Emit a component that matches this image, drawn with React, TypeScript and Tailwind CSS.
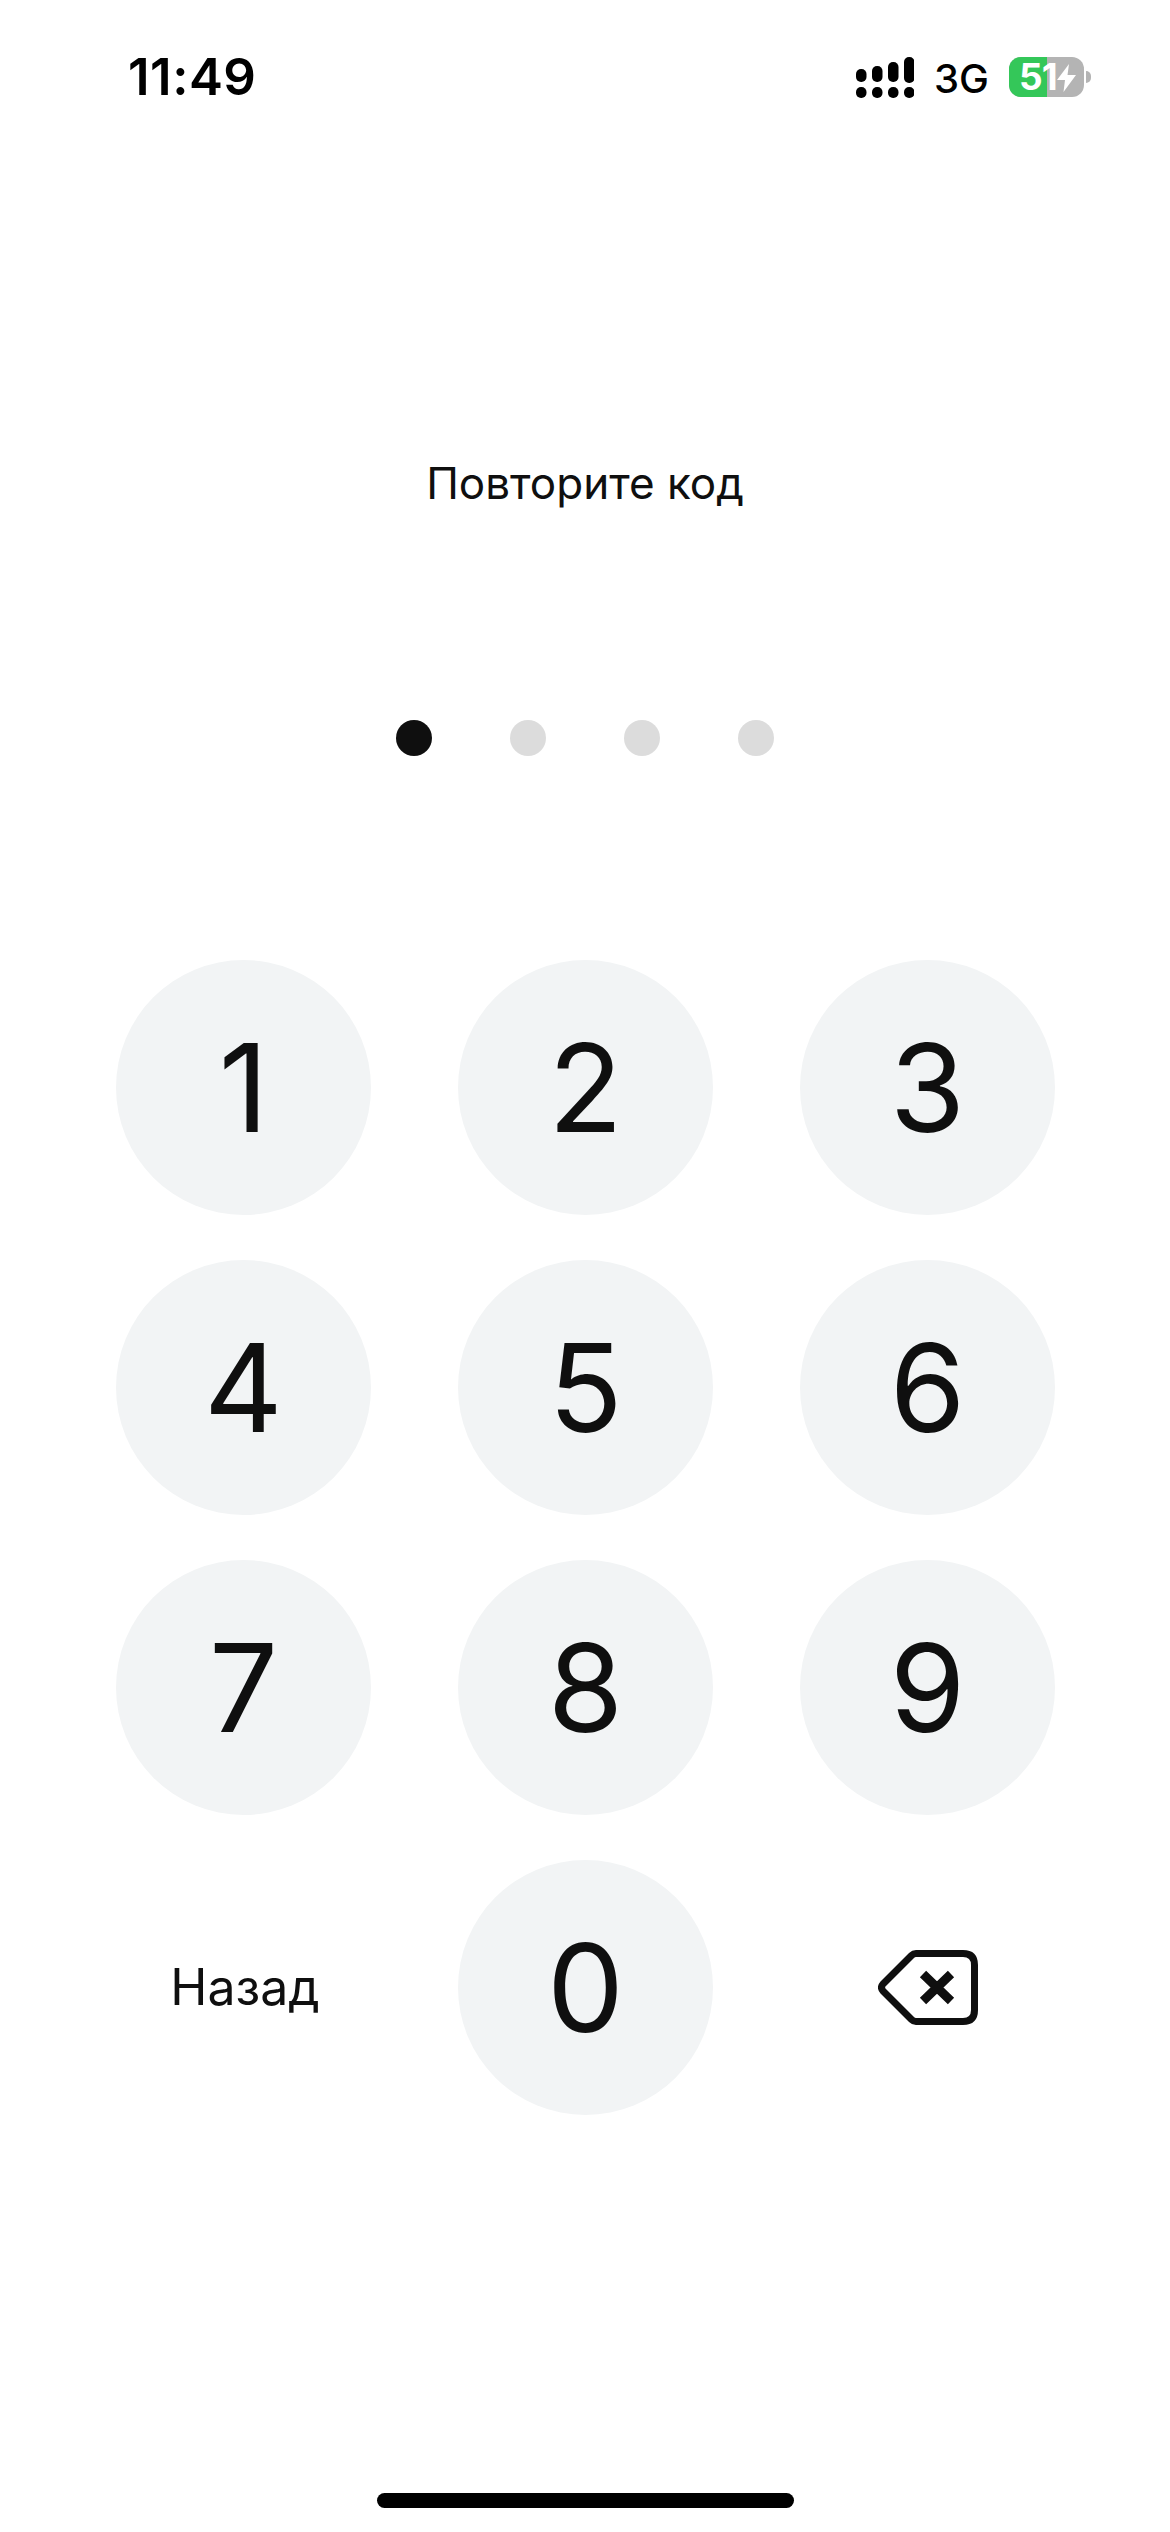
const INTER = "font-['Inter','Liberation_Sans',sans-serif]";

function Signal() {
  const tops = [12, 9, 5, 0];
  const heights = [13, 16, 20, 26];
  return (
    <svg width="58" height="41" viewBox="0 0 58 41" fill="#000">
      {tops.map((t, i) => (
        <g key={i}>
          <rect x={i * 16} y={t} width="10.5" height={heights[i]} rx="5" />
          <rect x={i * 16} y="30" width="10.5" height="11" rx="5" />
        </g>
      ))}
    </svg>
  );
}

function Battery() {
  return (
    <div className="relative w-[83px] h-[40px]">
      <div className="absolute left-0 top-0 w-[75px] h-[40px] rounded-[12px] overflow-hidden bg-[#b4b4b4]">
        <div className="h-full w-[38px] bg-[#34c759]" />
      </div>
      <div className="absolute left-[77px] top-[14px] w-[5px] h-[12px] rounded-r-[5px] bg-[#b4b4b4]" />
      <span className="absolute left-[10px] top-0 h-[40px] leading-[40px] text-[37px] font-bold tracking-[-1px] text-white">51</span>
      <svg className="absolute left-[48px] top-[7px]" width="19" height="28" viewBox="0 0 19 28" fill="#fff">
        <path d="M12 0 L0 16 H8 L6.5 28 L19 11 H10.5 Z" />
      </svg>
    </div>
  );
}

function Key({ d }: { d: string }) {
  return (
    <button className="w-[255px] h-[255px] rounded-full bg-[#f2f4f5] flex items-center justify-center text-[122px] font-normal leading-none text-[#0f0f0f]">
      {d}
    </button>
  );
}

function Backspace() {
  return (
    <svg width="100" height="75" viewBox="0 0 100 75" fill="none" stroke="#0f0f0f" strokeWidth="7" strokeLinejoin="round">
      <path d="M38 3.5 H85 Q96.5 3.5 96.5 15 V60 Q96.5 71.5 85 71.5 H38 Q35.5 71.5 33.5 69.5 L5 41 Q2 37.5 5 34 L33.5 5.5 Q35.5 3.5 38 3.5 Z" />
      <path d="M45 24 L73 51 M73 24 L45 51" strokeWidth="9" />
    </svg>
  );
}

export default function App() {
  return (
    <div className={`w-[1170px] h-[2532px] bg-white flex flex-col ${INTER}`}>
      <div className="h-[77px] pl-[128px] pr-[78px] pt-[47px] flex items-start justify-between">
        <span className="text-[51px] leading-[60px] font-semibold tracking-[0.5px] text-black">11:49</span>
        <div className="flex items-center h-[60px]">
          <Signal />
          <span className="ml-[20px] mr-[20px] mt-[3px] text-[40px] leading-[60px] font-medium text-black">3G</span>
          <Battery />
        </div>
      </div>
      <div className="pt-[381px] flex justify-center">
        <span className="text-[44px] leading-[50px] text-[#0f0f0f]">Повторите код</span>
      </div>
      <div className="mt-[212px] flex justify-center gap-[78px]">
        <div className="w-[36px] h-[36px] rounded-full bg-[#0f0f0f]" />
        <div className="w-[36px] h-[36px] rounded-full bg-[#dcdcdc]" />
        <div className="w-[36px] h-[36px] rounded-full bg-[#dcdcdc]" />
        <div className="w-[36px] h-[36px] rounded-full bg-[#dcdcdc]" />
      </div>
      <div className="mt-[204px] pl-[116px] grid grid-cols-[255px_255px_255px] gap-x-[87px] gap-y-[45px]">
        {["1", "2", "3", "4", "5", "6", "7", "8", "9"].map((d) => (
          <Key key={d} d={d} />
        ))}
        <div className="h-[255px] pl-[3px] flex items-center justify-center text-[50px] text-[#0f0f0f]">Назад</div>
        <Key d="0" />
        <div className="h-[255px] flex items-center justify-center">
          <Backspace />
        </div>
      </div>
      <div className="mt-auto mb-[24px] ml-[377px] w-[417px] h-[15px] rounded-full bg-black" />
    </div>
  );
}
